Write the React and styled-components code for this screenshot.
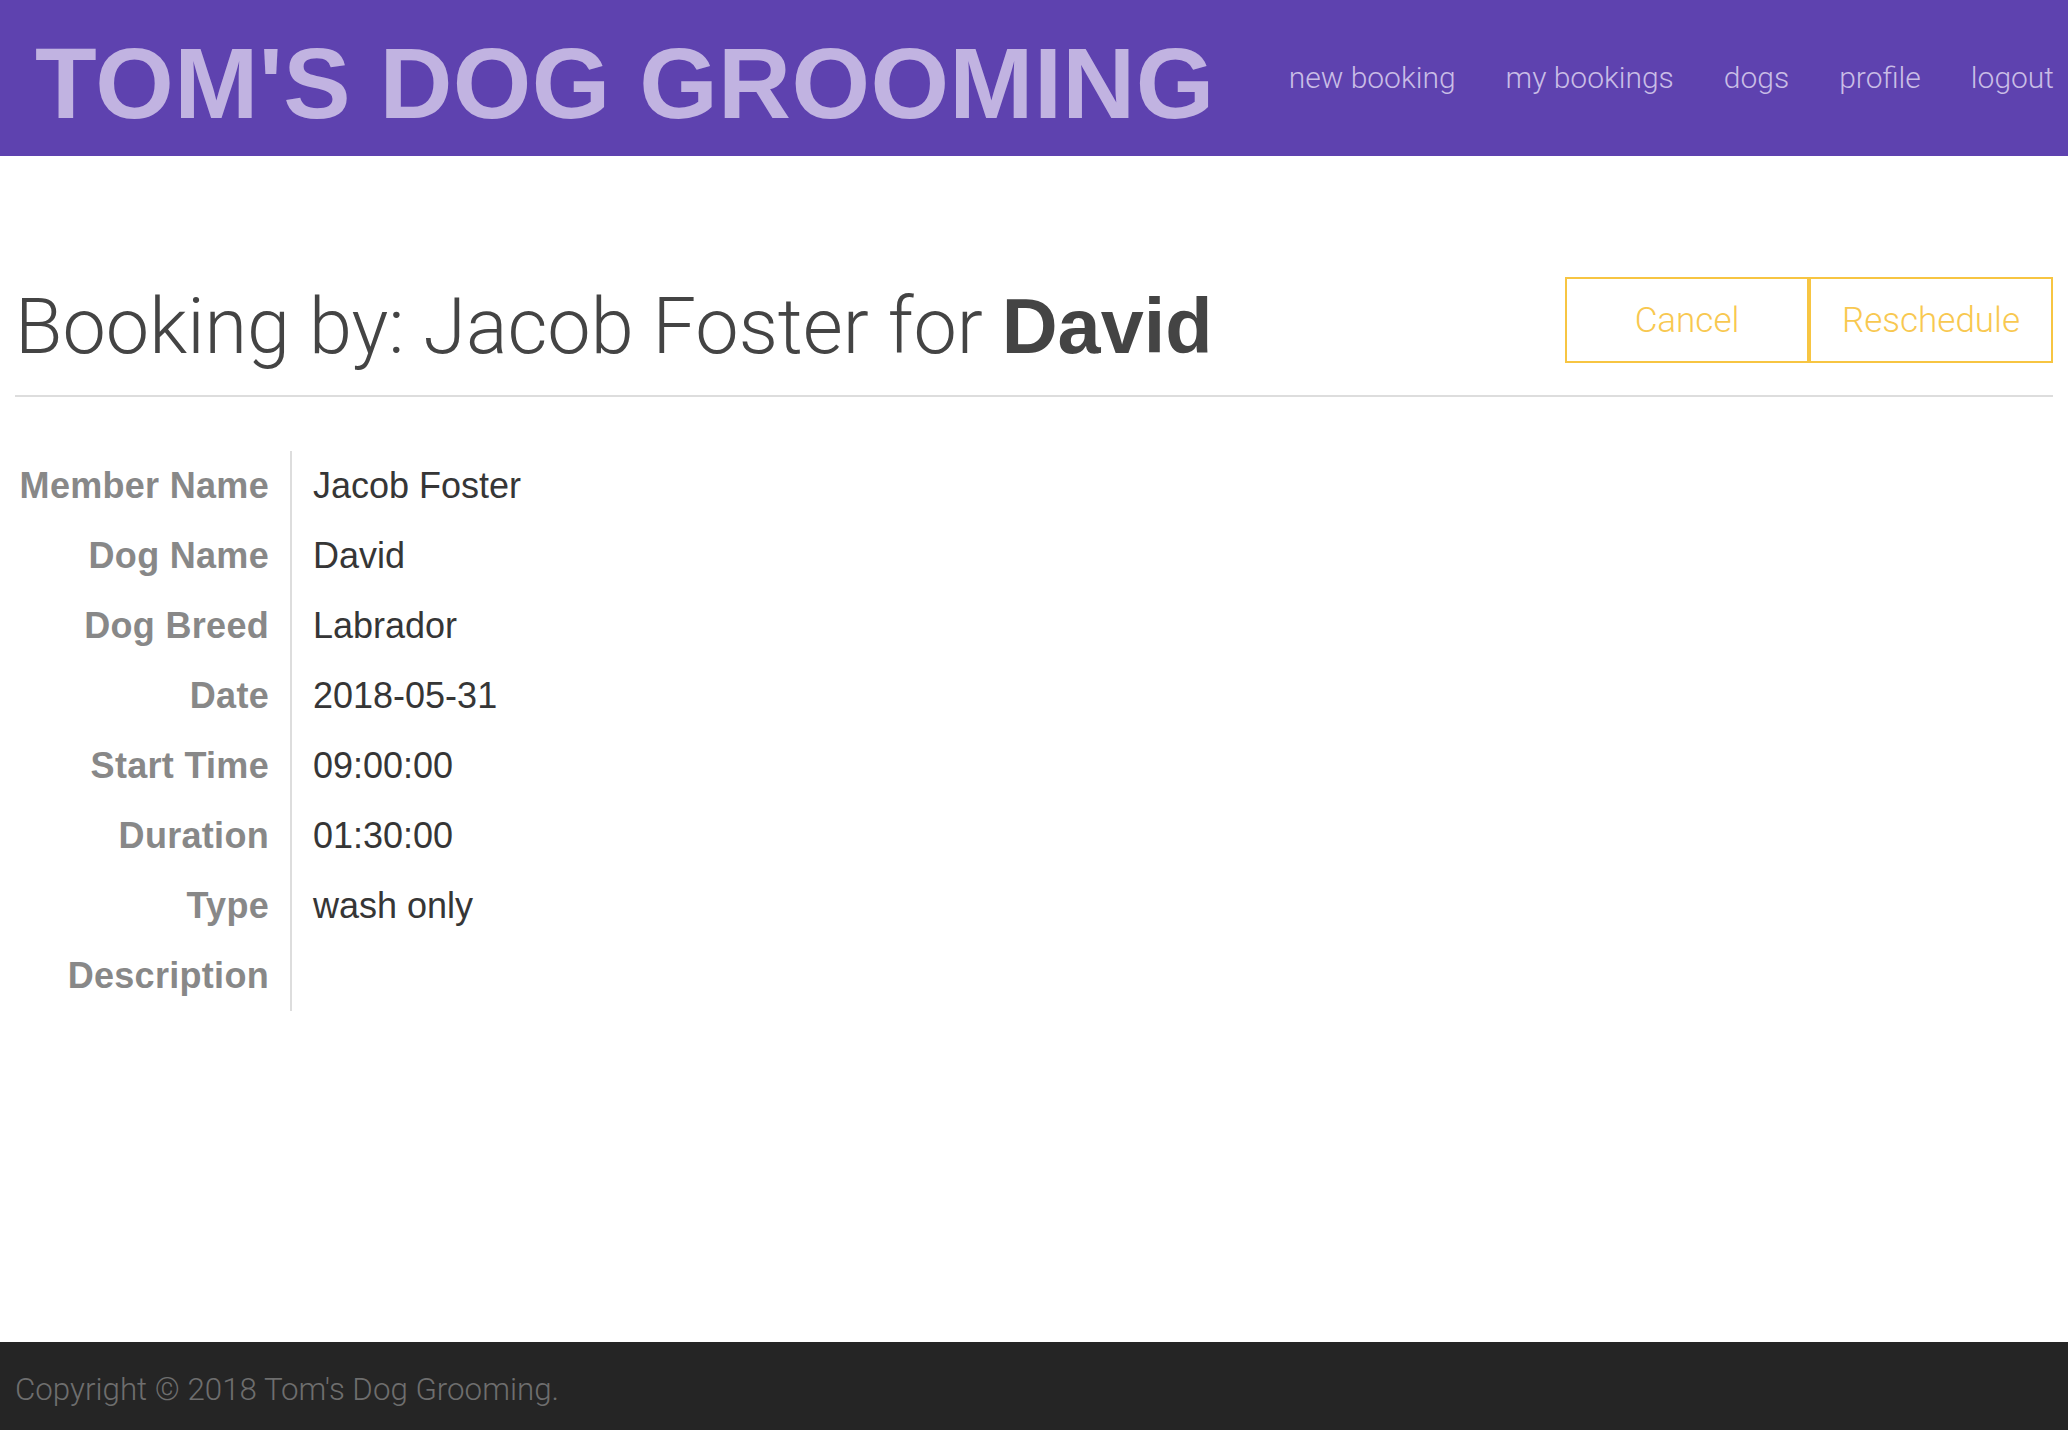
import React from 'react';
import styled, { createGlobalStyle } from 'styled-components';

const GlobalStyle = createGlobalStyle`
	html, body {
		margin: 0;
		padding: 0;
		background: #fff;
	}
	* {
		box-sizing: border-box;
	}
`;

const Page = styled.div`
	min-height: 100vh;
	display: flex;
	flex-direction: column;
	font-family: "Liberation Sans", Arial, sans-serif;
`;

const Header = styled.header`
	height: 156px;
	background: #5e42af;
	display: flex;
	justify-content: space-between;
	align-items: flex-start;
	padding: 0 14px 0 35px;
`;

const Brand = styled.a`
	margin-top: 33px;
	font-family: "Liberation Sans", Arial, sans-serif;
	font-weight: bold;
	font-size: 101px;
	line-height: 100px;
	letter-spacing: 0.4px;
	color: #c1b3e1;
	text-decoration: none;
	white-space: nowrap;
`;

const Nav = styled.nav`
	margin-top: 60px;
	display: flex;
	gap: 50px;
`;

const NavLink = styled.a`
	font-family: Roboto, "Liberation Sans", sans-serif;
	font-weight: 300;
	font-size: 30px;
	line-height: 36px;
	color: #c9bde6;
	text-decoration: none;
	white-space: nowrap;
`;

const Main = styled.main`
	flex: 1;
	padding: 0 15px;
`;

const HeadingRow = styled.div`
	display: flex;
	justify-content: space-between;
	align-items: flex-start;
	padding: 121px 0 25px;
	border-bottom: 2px solid #dddddd;
`;

const Heading = styled.h1`
	margin: 6px 0 0;
	font-family: Roboto, "Liberation Sans", sans-serif;
	font-weight: 300;
	font-size: 77.4px;
	line-height: 86px;
	color: #444;
	white-space: nowrap;

	& > b {
		font-family: "Liberation Sans", Arial, sans-serif;
		font-weight: bold;
	}
`;

const ButtonGroup = styled.div`
	display: flex;
`;

const OutlineButton = styled.button`
	width: 244px;
	height: 86px;
	background: transparent;
	border: 2px solid #f7c542;
	color: #f8c850;
	font-family: Roboto, "Liberation Sans", sans-serif;
	font-weight: 300;
	font-size: 35px;
	cursor: pointer;
	padding: 0;
`;

const Details = styled.dl`
	margin: 54px 0 0;
	display: grid;
	grid-template-columns: 275px max-content;
	font-size: 36px;
	line-height: 70px;
`;

const Term = styled.dt`
	text-align: right;
	padding-right: 21px;
	font-weight: bold;
	letter-spacing: 0.3px;
	color: #888;
	white-space: nowrap;
`;

const Value = styled.dd`
	margin: 0;
	border-left: 2px solid #dddddd;
	padding-left: 21px;
	color: #363636;
	min-height: 70px;
	white-space: nowrap;
`;

const Footer = styled.footer`
	height: 88px;
	background: #252525;
	padding: 6px 15px 0;
	display: flex;
	align-items: center;
`;

const Copyright = styled.p`
	margin: 0;
	font-family: Roboto, "Liberation Sans", sans-serif;
	font-weight: 300;
	font-size: 31.3px;
	color: #6e6e6e;
`;

const booking = [
	['Member Name', 'Jacob Foster'],
	['Dog Name', 'David'],
	['Dog Breed', 'Labrador'],
	['Date', '2018-05-31'],
	['Start Time', '09:00:00'],
	['Duration', '01:30:00'],
	['Type', 'wash only'],
	['Description', ''],
];

export default function App() {
	return (
		<Page>
			<GlobalStyle />
			<Header>
				<Brand href="#">TOM'S DOG GROOMING</Brand>
				<Nav>
					<NavLink href="#">new booking</NavLink>
					<NavLink href="#">my bookings</NavLink>
					<NavLink href="#">dogs</NavLink>
					<NavLink href="#">profile</NavLink>
					<NavLink href="#">logout</NavLink>
				</Nav>
			</Header>
			<Main>
				<HeadingRow>
					<Heading>Booking by: Jacob Foster for <b>David</b></Heading>
					<ButtonGroup>
						<OutlineButton>Cancel</OutlineButton>
						<OutlineButton>Reschedule</OutlineButton>
					</ButtonGroup>
				</HeadingRow>
				<Details>
					{booking.map(([label, value]) => (
						<React.Fragment key={label}>
							<Term>{label}</Term>
							<Value>{value}</Value>
						</React.Fragment>
					))}
				</Details>
			</Main>
			<Footer>
				<Copyright>Copyright © 2018 Tom's Dog Grooming.</Copyright>
			</Footer>
		</Page>
	);
}
